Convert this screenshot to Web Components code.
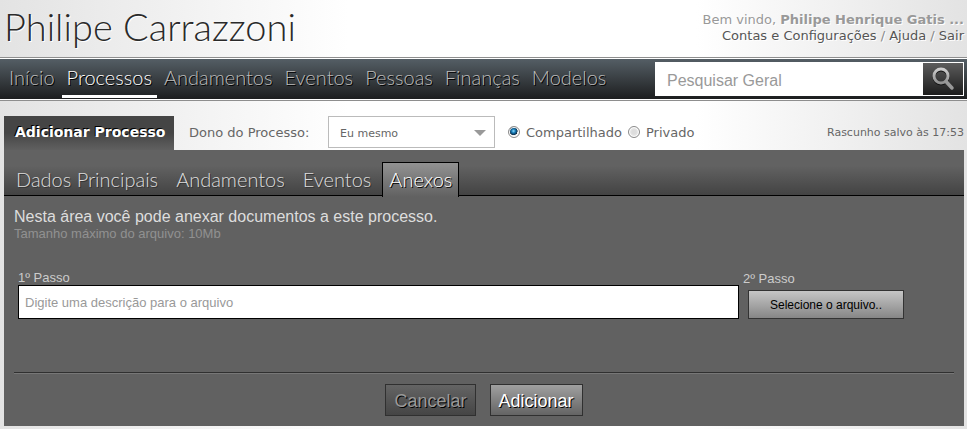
<!DOCTYPE html>
<html lang="pt-BR">
<head>
<meta charset="utf-8">
<meta name="viewport" content="width=device-width, initial-scale=1">
<title>Philipe Carrazzoni - Processos</title>
<style>
  :root {
    --display: Lato, "Open Sans", sans-serif;
    --wide: "DejaVu Sans", sans-serif;
    --plain: "Liberation Sans", Arial, sans-serif;
  }
  body {
    margin: 0;
    font-family: var(--wide);
    font-size: 13px;
    color: #666;
    background: linear-gradient(90deg, #e3e3e3, #fff 36%, #fff 72%, #e3e3e3);
  }
  main { display: flow-root; }
</style>
</head>
<body>
<page-header name="Philipe Carrazzoni">
  <span slot="user">Philipe Henrique Gatis ...</span>
  <a slot="links" href="#contas">Contas e Configurações</a>
  <a slot="links" href="#ajuda">Ajuda</a>
  <a slot="links" href="#sair">Sair</a>
</page-header>
<main-nav>
  <nav-link href="#inicio">Início</nav-link>
  <nav-link href="#processos" current>Processos</nav-link>
  <nav-link href="#andamentos">Andamentos</nav-link>
  <nav-link href="#eventos">Eventos</nav-link>
  <nav-link href="#pessoas">Pessoas</nav-link>
  <nav-link href="#financas">Finanças</nav-link>
  <nav-link href="#modelos">Modelos</nav-link>
  <search-box slot="search"></search-box>
</main-nav>
<main>
  <process-bar>
    <span slot="title">Adicionar Processo</span>
    <span slot="status">Rascunho salvo às 17:53</span>
  </process-bar>
  <process-panel>
    <tab-item slot="tabs">Dados Principais</tab-item>
    <tab-item slot="tabs">Andamentos</tab-item>
    <tab-item slot="tabs">Eventos</tab-item>
    <tab-item slot="tabs" selected>Anexos</tab-item>
    <attach-form></attach-form>
    <action-button slot="actions" kind="quiet">Cancelar</action-button>
    <action-button slot="actions">Adicionar</action-button>
  </process-panel>
</main>
<script>
const element = (name, html, setup) => {
  const template = document.createElement('template');
  template.innerHTML = `<style>*{box-sizing:border-box}</style>${html}`;
  customElements.define(name, class extends HTMLElement {
    constructor() {
      super();
      this.attachShadow({ mode: 'open' }).append(template.content.cloneNode(true));
    }
    connectedCallback() { if (setup) setup(this, this.shadowRoot); }
  });
};

element('page-header', `
<style>
  :host { display: flex; justify-content: space-between; height: 57px; padding: 0 3px 0 4px; }
  h1 { margin: 0; font: 300 38px/52px var(--display); color: #2a2a2a; text-shadow: 1px 1px #fff; white-space: nowrap; }
  .account { padding-top: 12px; text-align: right; line-height: 16px; color: #999; text-shadow: 1px 1px #fff; white-space: nowrap; }
  p { margin: 0; }
  ::slotted(a) { color: #555; text-decoration: none; }
  ::slotted(a:not(:last-child))::after { content: " / "; color: #888; white-space: pre; }
</style>
<h1></h1>
<div class="account">
  <p>Bem vindo, <b><slot name="user"></slot></b></p>
  <p><slot name="links"></slot></p>
</div>`, (host, root) => { root.querySelector('h1').textContent = host.getAttribute('name'); });

element('main-nav', `
<style>
  :host {
    display: flex; justify-content: space-between; height: 44px; padding-right: 3px;
    border: solid #8e8e8e; border-width: 1px 0; box-sizing: border-box;
    background: linear-gradient(#566067, #1b1c1d); box-shadow: inset 0 1px #fff, inset 0 -1px #fff;
  }
  nav { display: flex; gap: 2px; padding: 1px 0 1px 4px; }
  .search { flex: 0 1 309px; padding-top: 4px; }
</style>
<nav aria-label="Principal"><slot></slot></nav>
<div class="search"><slot name="search"></slot></div>`);

element('nav-link', `
<style>
  :host { display: flex; }
  a {
    height: 39px; padding: 0 5px; border-bottom: 3px solid transparent;
    font: 300 20px/36px var(--display); color: #bbb; text-decoration: none; text-shadow: 1px 1px #000;
  }
  :host([current]) a { color: #fff; border-color: #fff; }
</style>
<a><slot></slot></a>`, (host, root) => {
  const a = root.querySelector('a');
  a.href = host.getAttribute('href');
  if (host.hasAttribute('current')) a.setAttribute('aria-current', 'page');
});

element('search-box', `
<style>
  :host { display: block; }
  form { display: flex; height: 34px; padding: 1px; background: #fff; }
  input { flex: 1; min-width: 0; border: 0; padding: 4px 11px 0; background: none; font: 16px var(--plain); color: #555; }
  input::placeholder { color: #999; opacity: 1; }
  button { display: grid; place-items: center; width: 40px; border: 0; padding: 0; background: linear-gradient(#5c5c5c, #1c1c1c); }
</style>
<form role="search">
  <input type="text" placeholder="Pesquisar Geral" aria-label="Pesquisar Geral">
  <button type="button" aria-label="Buscar">
    <svg width="24" height="24" viewBox="0 0 24 24" fill="none">
      <defs><linearGradient id="g" x1="0" y1="0" x2="0" y2="1"><stop stop-color="#ccc"/><stop offset="1" stop-color="#909090"/></linearGradient></defs>
      <circle cx="10" cy="10" r="7" stroke="#111" stroke-width="3"/>
      <circle cx="10" cy="9" r="7" stroke="url(#g)" stroke-width="3"/>
      <path d="M15 14.500L21 21" stroke="#999" stroke-width="3.500" stroke-linecap="round"/>
    </svg>
  </button>
</form>`);

element('process-bar', `
<style>
  :host { display: flex; align-items: flex-start; margin: 15px 3px 0 4px; white-space: nowrap; }
  h2 {
    margin: 0; width: 170px; height: 34px; padding-left: 11px;
    font: bold 14px/32px var(--wide); color: #fff; text-shadow: -1px -1px #000;
    background: linear-gradient(#454545 50%, #606060);
  }
  .owner { padding-left: 15px; line-height: 34px; width: 154px; flex: none; }
  .pick { display: grid; width: 167px; height: 32px; align-items: center; }
  .pick > * { grid-area: 1 / 1; }
  select {
    appearance: none; width: 100%; height: 32px; border: 1px solid #bbb; border-radius: 0;
    padding: 2px 11px 0; background: #fff; font: 11px var(--wide); color: #666;
  }
  svg { justify-self: end; margin: 2px 9px 0 0; pointer-events: none; }
  fieldset { display: flex; gap: 6px; border: 0; margin: 0; padding: 0 0 0 13px; }
  label { line-height: 34px; }
  fieldset label { display: flex; gap: 6px; }
  input {
    appearance: none; width: 12px; height: 12px; margin: 10px 0 0; border: 1px solid #8a8a8a; border-radius: 50%;
    background: radial-gradient(#ddd 30%, #fff); box-shadow: inset 0 0 0 1px #fff;
  }
  input:checked { background: radial-gradient(circle at 45% 40%, #8fdcff 0, #1379b5 24%, #0b2a44 48%, #eee 52%); }
  .status { margin-left: auto; font-size: 11px; line-height: 34px; }
</style>
<h2><slot name="title"></slot></h2>
<label class="owner" for="owner">Dono do Processo:</label>
<div class="pick">
  <select id="owner"><option>Eu mesmo</option></select>
  <svg width="12" height="6" viewBox="0 0 12 6"><path d="M0 0h12L6 6z" fill="#999"/></svg>
</div>
<fieldset aria-label="Visibilidade">
  <label><input type="radio" name="visibility" checked>Compartilhado</label>
  <label><input type="radio" name="visibility">Privado</label>
</fieldset>
<div class="status"><slot name="status"></slot></div>`);

element('process-panel', `
<style>
  :host { display: block; margin: 0 3px 3px 4px; background: #616161; color: #ddd; }
  .tabs { display: flex; gap: 4px; height: 46px; padding: 12px 0 0 5px; border-bottom: 1px solid #000; background: linear-gradient(#626262 35%, #434343); }
  .content { padding: 0 10px; }
  footer { display: flex; justify-content: center; gap: 14px; padding: 11px 0 10px; border-top: 1px solid #303030; box-shadow: inset 0 1px #777; }
</style>
<div class="tabs" role="tablist"><slot name="tabs"></slot></div>
<div class="content">
  <slot></slot>
  <footer><slot name="actions"></slot></footer>
</div>`);

element('tab-item', `
<style>
  :host { display: flex; }
  button {
    height: 34px; padding: 0 6px 2px; border: 1px solid transparent; border-bottom: 0; background: none;
    font: 300 20px/30px var(--display); color: #ddd; text-shadow: 1px 1px #333; white-space: nowrap;
  }
  :host([selected]) button { height: 35px; border-color: #000; color: #fff; text-shadow: 1px 1px #000; background: linear-gradient(#929292, #616161); }
</style>
<button type="button" role="tab"><slot></slot></button>`, (host, root) => {
  root.querySelector('button').setAttribute('aria-selected', host.hasAttribute('selected'));
});

element('attach-form', `
<style>
  :host { display: block; box-sizing: border-box; padding: 11px 0 53px; font-family: var(--plain); }
  p { margin: 0; font-size: 16px; line-height: 19px; color: #ddd; }
  small { display: block; font-size: 13px; line-height: 16px; color: #919191; }
  form { display: flex; padding: 28px 50px 0 4px; gap: 4px; font-size: 13px; color: #ccc; }
  .text { flex: 1; display: grid; }
  .file { padding-top: 1px; width: 161px; display: grid; justify-items: end; }
  label { line-height: 15px; justify-self: start; }
  input { width: 100%; height: 34px; border: 1px solid #000; padding: 0 6px; background: #fff; font: 13px var(--plain); color: #555; }
  input::placeholder { color: #999; opacity: 1; }
  button { width: 156px; height: 29px; margin-top: 4px; border: 1px solid #333; padding: 0; font: 12px var(--plain); color: #000; background: linear-gradient(#c6c6c6, #868686); }
</style>
<p>Nesta área você pode anexar documentos a este processo.</p>
<small>Tamanho máximo do arquivo: 10Mb</small>
<form>
  <div class="text">
    <label for="description">1º Passo</label>
    <input id="description" type="text" placeholder="Digite uma descrição para o arquivo">
  </div>
  <div class="file">
    <label for="choose">2º Passo</label>
    <button id="choose" type="button">Selecione o arquivo..</button>
  </div>
</form>`);

element('action-button', `
<style>
  :host { display: flex; }
  button { height: 32px; padding: 2px 8px 0; border: 1px solid #303030; font: 18px var(--plain); color: #fff; text-shadow: 1px 1px #000; background: linear-gradient(#a0a0a0, #646464); }
  :host([kind="quiet"]) button { color: #999; background: linear-gradient(#646464, #454545); }
</style>
<button type="button"><slot></slot></button>`);
</script>
</body>
</html>
